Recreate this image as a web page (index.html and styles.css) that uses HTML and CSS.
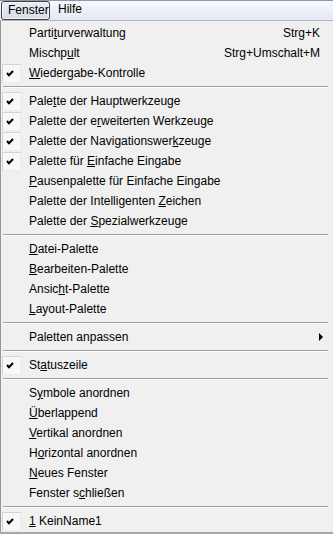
FILE: index.html
```html
<!DOCTYPE html>
<html lang="de">
<head>
    <meta charset="UTF-8">
    <meta name="viewport" content="width=device-width, initial-scale=1.0">
    <title>Fenster</title>
    <link rel="stylesheet" href="styles.css">
</head>
<body>
    <div class="menubar">
        <div class="bar-item active">Fenster</div>
        <div class="bar-item">Hilfe</div>
    </div>

    <div class="menu">
        <div class="item"><span class="check"></span><span class="label">Parti<u>t</u>urverwaltung</span><span class="shortcut">Strg+K</span></div>
        <div class="item"><span class="check"></span><span class="label">Mischp<u>u</u>lt</span><span class="shortcut">Strg+Umschalt+M</span></div>
        <div class="item"><span class="check on"><svg viewBox="0 0 8 7"><polyline points="1,3 3,5.3 7,1"/></svg></span><span class="label"><u>W</u>iedergabe-Kontrolle</span></div>

        <div class="sep"></div>

        <div class="item"><span class="check on"><svg viewBox="0 0 8 7"><polyline points="1,3 3,5.3 7,1"/></svg></span><span class="label">Pale<u>t</u>te der Hauptwerkzeuge</span></div>
        <div class="item"><span class="check on"><svg viewBox="0 0 8 7"><polyline points="1,3 3,5.3 7,1"/></svg></span><span class="label">Palette der e<u>r</u>weiterten Werkzeuge</span></div>
        <div class="item"><span class="check on"><svg viewBox="0 0 8 7"><polyline points="1,3 3,5.3 7,1"/></svg></span><span class="label">Palette der Navigationswer<u>k</u>zeuge</span></div>
        <div class="item"><span class="check on"><svg viewBox="0 0 8 7"><polyline points="1,3 3,5.3 7,1"/></svg></span><span class="label">Palette für <u>E</u>infache Eingabe</span></div>
        <div class="item"><span class="check"></span><span class="label"><u>P</u>ausenpalette für Einfache Eingabe</span></div>
        <div class="item"><span class="check"></span><span class="label">Palette der Intelligenten <u>Z</u>eichen</span></div>
        <div class="item"><span class="check"></span><span class="label">Palette der <u>S</u>pezialwerkzeuge</span></div>

        <div class="sep"></div>

        <div class="item"><span class="check"></span><span class="label"><u>D</u>atei-Palette</span></div>
        <div class="item"><span class="check"></span><span class="label"><u>B</u>earbeiten-Palette</span></div>
        <div class="item"><span class="check"></span><span class="label">Ansic<u>h</u>t-Palette</span></div>
        <div class="item"><span class="check"></span><span class="label"><u>L</u>ayout-Palette</span></div>

        <div class="sep"></div>

        <div class="item"><span class="check"></span><span class="label">Paletten anpassen</span><span class="arrow"></span></div>

        <div class="sep"></div>

        <div class="item"><span class="check on"><svg viewBox="0 0 8 7"><polyline points="1,3 3,5.3 7,1"/></svg></span><span class="label">St<u>a</u>tuszeile</span></div>

        <div class="sep"></div>

        <div class="item"><span class="check"></span><span class="label">S<u>y</u>mbole anordnen</span></div>
        <div class="item"><span class="check"></span><span class="label"><u>Ü</u>berlappend</span></div>
        <div class="item"><span class="check"></span><span class="label"><u>V</u>ertikal anordnen</span></div>
        <div class="item"><span class="check"></span><span class="label">H<u>o</u>rizontal anordnen</span></div>
        <div class="item"><span class="check"></span><span class="label"><u>N</u>eues Fenster</span></div>
        <div class="item"><span class="check"></span><span class="label">Fenster s<u>c</u>hließen</span></div>

        <div class="sep"></div>

        <div class="item"><span class="check on"><svg viewBox="0 0 8 7"><polyline points="1,3 3,5.3 7,1"/></svg></span><span class="label"><u>1</u> KeinName1</span></div>
    </div>
</body>
</html>
```

FILE: styles.css
```css
body {
    margin: 0;
    padding: 0;
    background: #f0f0f0;
    font-family: "Liberation Sans", Arial, sans-serif;
    font-size: 12px;
    color: #000;
    overflow: hidden;
}
.menubar {
    display: flex;
    align-items: center;
    height: 20px;
    border-top: 1px solid #8e99a8;
    border-bottom: 1px solid #b5b5b5;
    box-sizing: border-box;
    height: 21px;
    background: linear-gradient(#f6f8fc, #e2e9f3);
}
.bar-item {
    height: 19px;
    line-height: 17px;
    padding: 0 8px 0 7px;
    box-sizing: border-box;
}
.bar-item.active {
    width: 49px;
    margin-left: 1px;
    margin-right: 1px;
    padding: 0 0 0 6px;
    border: 1px solid #3b3f46;
    border-radius: 3px;
    background: linear-gradient(#e9edf2, #d7dde5);
    box-shadow: inset 0 0 0 1px #f4f6f9;
}
.menu {
    border-left: 1px solid #979797;
    border-bottom: 2px solid #a7a7a7;
    padding: 2px 0 1px 0;
    background: #f0f0f0;
}
.item {
    display: flex;
    align-items: center;
    height: 20px;
    padding-left: 1px;
}
.check {
    width: 19px;
    height: 19px;
    margin-right: 8px;
    box-sizing: border-box;
    display: flex;
    align-items: center;
    justify-content: center;
}
.check.on {
    border: 1px solid #d4d4d4;
    border-right-color: #ececec;
    border-bottom-color: #ececec;
    background: #f8f8f8;
}
.check svg {
    width: 8px;
    height: 7px;
    margin-left: -3px;
}
.check polyline {
    fill: none;
    stroke: #000;
    stroke-width: 2;
}
.label u {
    text-decoration: underline;
    text-underline-offset: 1px;
}
.shortcut {
    margin-left: auto;
    padding-right: 13px;
}
.arrow {
    margin-left: auto;
    margin-right: 10px;
    width: 0;
    height: 0;
    border-top: 4px solid transparent;
    border-bottom: 4px solid transparent;
    border-left: 4px solid #000;
}
.sep {
    height: 8px;
    box-sizing: border-box;
    padding-top: 3px;
    margin: 0 5px 0 2px;
}
.sep::before {
    content: "";
    display: block;
    height: 1px;
    background: #a0a0a0;
    border-bottom: 1px solid #ffffff;
}
```
